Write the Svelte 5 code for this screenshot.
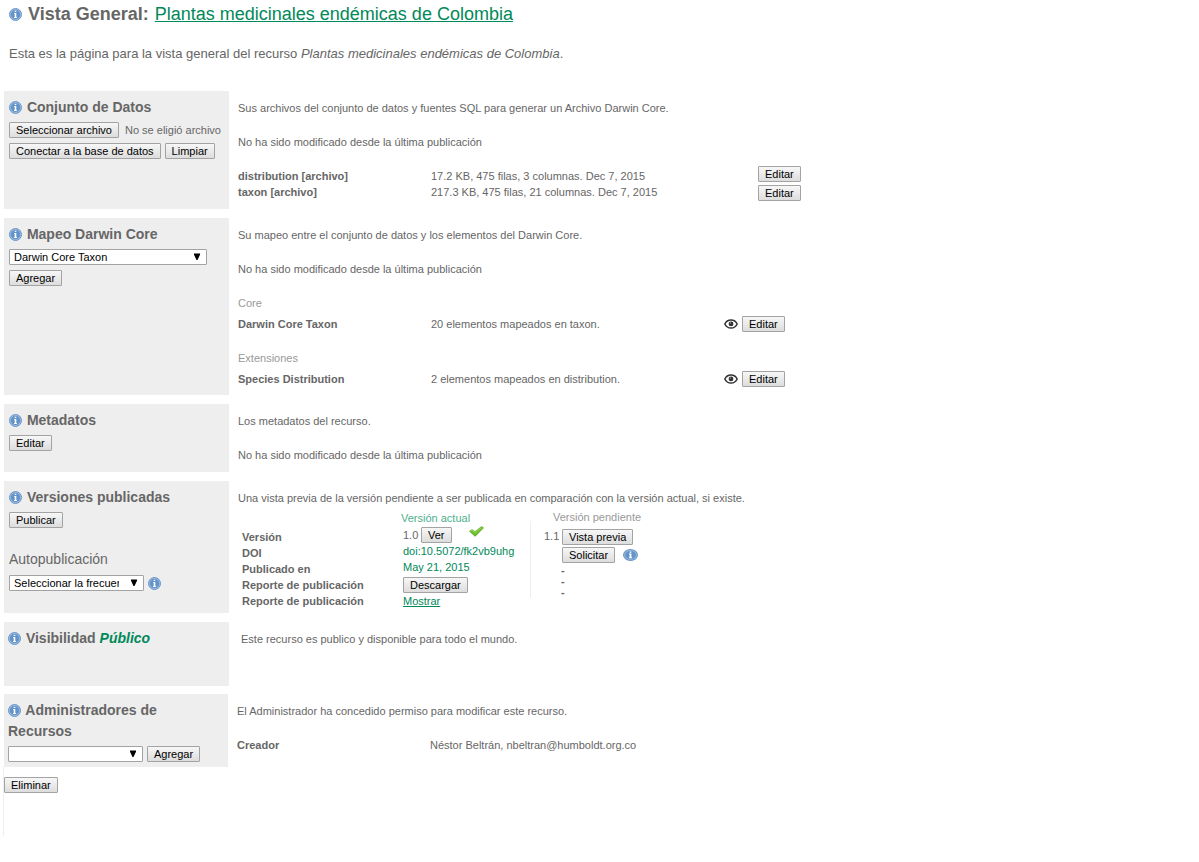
<script>
  const files = [
    { name: 'distribution [archivo]', detail: '17.2 KB, 475 filas, 3 columnas. Dec 7, 2015' },
    { name: 'taxon [archivo]', detail: '217.3 KB, 475 filas, 21 columnas. Dec 7, 2015' },
  ];
  const mappings = [
    { group: 'Core', name: 'Darwin Core Taxon', detail: '20 elementos mapeados en taxon.' },
    { group: 'Extensiones', name: 'Species Distribution', detail: '2 elementos mapeados en distribution.' },
  ];
  const unchanged = 'No ha sido modificado desde la última publicación';
</script>

{#snippet info()}
  <svg class="info" viewBox="0 0 13 13" preserveAspectRatio="none" aria-hidden="true">
    <circle cx="6.5" cy="6.5" r="6" fill="#9dbde2" stroke="#6c96c6" />
    <circle cx="6.5" cy="6.5" r="4.7" fill="#6493ca" />
    <path d="M5.7 2.7h1.6v1.4H5.7zM5.2 5h2.1v4h.6v.9H5.1V9h.6V5.9h-.5z" fill="#fff" />
  </svg>
{/snippet}

{#snippet arrow()}
  <svg class="arrow" viewBox="0 0 6 7" aria-hidden="true"><path d="M0 .5h6v1.2L3.5 7h-1L0 1.7z" fill="#000" /></svg>
{/snippet}

<main>
  <h1>{@render info()}<span>Vista General:</span> <a href="#recurso">Plantas medicinales endémicas de Colombia</a></h1>
  <p class="intro">Esta es la página para la vista general del recurso <em>Plantas medicinales endémicas de Colombia</em>.</p>

  <section>
    <div class="side">
      <h2>{@render info()} Conjunto de Datos</h2>
      <div class="row">
        <input class="hidden" type="file" id="archivo" />
        <label class="btn" for="archivo">Seleccionar archivo</label>
        <span class="filename">No se eligió archivo</span>
      </div>
      <div class="row"><button>Conectar a la base de datos</button><button>Limpiar</button></div>
    </div>
    <div class="body">
      <p>Sus archivos del conjunto de datos y fuentes SQL para generar un Archivo Darwin Core.</p>
      <p>{unchanged}</p>
      <div class="sources">
        <table>
          <tbody>
            {#each files as f}
              <tr><th scope="row">{f.name}</th><td>{f.detail}</td></tr>
            {/each}
          </tbody>
        </table>
        <div class="actions">
          {#each files as f}<button>Editar</button>{/each}
        </div>
      </div>
    </div>
  </section>

  <section>
    <div class="side">
      <h2>{@render info()} Mapeo Darwin Core</h2>
      <div class="select wide">
        <select aria-label="Mapeo Darwin Core"><option>Darwin Core Taxon</option></select>
        {@render arrow()}
      </div>
      <div class="row"><button>Agregar</button></div>
    </div>
    <div class="body">
      <p>Su mapeo entre el conjunto de datos y los elementos del Darwin Core.</p>
      <p>{unchanged}</p>
      {#each mappings as m}
        <div class="group">
          <h3>{m.group}</h3>
          <div class="mapping">
            <b>{m.name}</b>
            <span>{m.detail}</span>
            <svg class="eye" viewBox="0 0 14 10" aria-hidden="true">
              <path d="M.8 5C3.4-.4 10.6-.4 13.2 5 10.6 10.4 3.4 10.4.8 5z" fill="#fff" stroke="#333" stroke-width="1.5" />
              <circle cx="7" cy="4.9" r="2.4" fill="#333" />
              <circle cx="6.3" cy="4" r=".7" fill="#999" />
            </svg>
            <button>Editar</button>
          </div>
        </div>
      {/each}
    </div>
  </section>

  <section>
    <div class="side">
      <h2>{@render info()} Metadatos</h2>
      <div class="row"><button>Editar</button></div>
    </div>
    <div class="body">
      <p>Los metadatos del recurso.</p>
      <p>{unchanged}</p>
    </div>
  </section>

  <section>
    <div class="side">
      <h2>{@render info()} Versiones publicadas</h2>
      <div class="row"><button>Publicar</button></div>
      <label class="auto" for="frecuencia">Autopublicación</label>
      <div class="row">
        <div class="select">
          <select id="frecuencia"><option>Seleccionar la frecuencia</option></select>
          {@render arrow()}
        </div>
        {@render info()}
      </div>
    </div>
    <div class="body versions">
      <p>Una vista previa de la versión pendiente a ser publicada en comparación con la versión actual, si existe.</p>
      <div class="columns">
        <div class="labels">
          <b>Versión</b><b>DOI</b><b>Publicado en</b><b>Reporte de publicación</b><b>Reporte de publicación</b>
        </div>
        <div class="current">
          <h3>Versión actual</h3>
          <div class="line">
            <span class="number">1.0</span><button>Ver</button>
            <svg class="check" viewBox="0 0 15 11" aria-hidden="true">
              <path d="M.4 5.2 3 3.6l3 2L12.6.5l2 1.3L6.2 10.4z" fill="#6cbc2c" stroke="#5aa526" stroke-width=".6" />
              <path d="M1.6 5.1 3 4.4l3 2.2 6.6-5" fill="none" stroke="#a4dc62" stroke-width=".9" />
            </svg>
          </div>
          <div class="line">doi:10.5072/fk2vb9uhg</div>
          <div class="line">May 21, 2015</div>
          <div class="line report"><button>Descargar</button></div>
          <div class="line"><a href="#reporte">Mostrar</a></div>
        </div>
        <div class="pending">
          <h3>Versión pendiente</h3>
          <div class="row"><span class="number">1.1</span><button>Vista previa</button></div>
          <div class="row indent"><button>Solicitar</button>{@render info()}</div>
          <div class="dashes"><b>-</b><b>-</b><b>-</b></div>
        </div>
      </div>
    </div>
  </section>

  <section class="visibility">
    <div class="side"><h2>{@render info()} Visibilidad <em>Público</em></h2></div>
    <div class="body"><p>Este recurso es publico y disponible para todo el mundo.</p></div>
  </section>

  <section class="managers">
    <div class="side">
      <h2>{@render info()} Administradores de Recursos</h2>
      <div class="row">
        <div class="select">
          <select aria-label="Administrador"><option></option></select>
          {@render arrow()}
        </div>
        <button>Agregar</button>
      </div>
    </div>
    <div class="body">
      <p>El Administrador ha concedido permiso para modificar este recurso.</p>
      <table><tbody><tr><th scope="row">Creador</th><td>Néstor Beltrán, nbeltran@humboldt.org.co</td></tr></tbody></table>
    </div>
  </section>

  <footer><button>Eliminar</button></footer>
</main>

<style>
  :global(body) {
    margin: 0;
    background: #fff;
  }
  main {
    padding-bottom: 24px;
    color: #666;
    font: 11px/17px 'Liberation Sans', Arial, sans-serif;
  }
  h1, h2, h3, p {
    margin: 0;
  }
  h1 {
    display: flex;
    align-items: center;
    gap: 6px;
    padding: 2px 9px 0;
    font-size: 18px;
    line-height: 24px;
  }
  h1 a {
    font-weight: normal;
  }
  a {
    color: #008959;
    text-underline-offset: 1px;
  }
  .intro {
    padding: 18px 9px 28px;
    font-size: 13px;
    line-height: 19px;
  }
  .info {
    flex: none;
    width: 13px;
    height: 13px;
  }
  section {
    display: grid;
    grid-template-columns: 225px minmax(0, 1fr);
    margin: 0 4px 9px;
  }
  .side {
    display: flex;
    flex-direction: column;
    gap: 5px;
    padding: 6px 5px 5px;
    background: #eee;
  }
  h2 {
    margin-bottom: -1px;
    font-size: 14px;
    line-height: 21px;
  }
  h2 .info {
    margin-right: 1px;
    vertical-align: -2px;
  }
  h2 em {
    color: #008959;
  }
  .row {
    display: flex;
    align-items: center;
    gap: 4px;
  }
  button, .btn {
    box-sizing: border-box;
    flex: none;
    height: 16px;
    padding: 0 6px;
    border: 1px solid #a3a3a3;
    border-radius: 1px;
    background: linear-gradient(#f7f7f7, #dddddd);
    color: #000;
    font: 11px/14px 'Liberation Sans', Arial, sans-serif;
    white-space: nowrap;
  }
  .filename {
    margin-left: 2px;
    white-space: nowrap;
    line-height: 16px;
  }
  .hidden {
    position: absolute;
    width: 1px;
    height: 1px;
    opacity: 0;
  }
  .select {
    position: relative;
    width: 135px;
    height: 16px;
  }
  .select.wide {
    width: 198px;
  }
  select {
    display: block;
    box-sizing: border-box;
    width: 100%;
    height: 16px;
    padding: 0 24px 0 4px;
    border: 1px solid #a3a3a3;
    border-radius: 1px;
    appearance: none;
    background: #fff;
    color: #000;
    font: 11px/14px 'Liberation Sans', Arial, sans-serif;
    text-overflow: clip;
  }
  .arrow {
    position: absolute;
    top: 4px;
    right: 7px;
    width: 6px;
    height: 7px;
    pointer-events: none;
  }
  .body {
    padding: 9px 0 8px 9px;
  }
  .body p + * {
    margin-top: 17px;
  }
  table {
    border-collapse: collapse;
    line-height: 16px;
  }
  th, td {
    padding: 0;
    text-align: left;
  }
  th {
    width: 193px;
  }
  .sources {
    display: grid;
    grid-template-columns: 520px auto;
    align-items: start;
    justify-content: start;
  }
  .actions {
    display: flex;
    flex-direction: column;
    gap: 3px;
    margin-top: -2px;
  }
  .group + .group {
    margin-top: 18px;
  }
  h3 {
    color: #999;
    font-size: 11px;
    font-weight: normal;
    line-height: 17px;
  }
  .mapping {
    display: grid;
    grid-template-columns: 193px 293px 14px auto;
    align-items: center;
    justify-content: start;
    margin-top: 4px;
    line-height: 16px;
  }
  .mapping button {
    margin-left: 4px;
  }
  .eye {
    width: 14px;
    height: 10px;
  }
  .auto {
    margin-top: 16px;
    font-size: 14px;
    line-height: 21px;
  }
  .body.versions {
    padding-bottom: 4px;
  }
  .body .columns {
    display: grid;
    grid-template-columns: 159px 129px auto;
    justify-content: start;
    margin-top: 3px;
    padding-left: 4px;
  }
  .labels {
    display: flex;
    flex-direction: column;
    padding-top: 19px;
    line-height: 16px;
  }
  .current {
    color: #008959;
  }
  .current h3 {
    color: #4db08c;
  }
  .line {
    display: flex;
    align-items: center;
    height: 16px;
    padding-left: 2px;
  }
  .report {
    margin-top: 2px;
  }
  .number {
    width: 18px;
    color: #666;
  }
  .check {
    width: 15px;
    height: 11px;
    margin: -8px 0 0 17px;
  }
  .pending {
    display: flex;
    flex-direction: column;
    gap: 2px;
    height: 77px;
    margin-top: 11px;
    padding-left: 13px;
    border-left: 1px solid #eee;
  }
  .pending h3 {
    margin-top: -12px;
    padding-left: 9px;
  }
  .pending .row {
    gap: 0;
  }
  .indent {
    padding-left: 18px;
  }
  .indent .info {
    width: 15px;
    height: 12px;
    margin-left: 8px;
  }
  .dashes {
    display: flex;
    flex-direction: column;
    padding-left: 17px;
    line-height: 11px;
  }
  .visibility .side {
    padding-bottom: 38px;
    padding-left: 4px;
  }
  .visibility .body {
    padding-left: 12px;
  }
  .managers {
    grid-template-columns: 224px minmax(0, 1fr);
    margin-top: -1px;
  }
  .managers .side {
    padding-left: 4px;
  }
  footer {
    margin: -9px 3px 0;
    padding: 10px 0 42px;
    border-left: 1px solid #eee;
  }
</style>
